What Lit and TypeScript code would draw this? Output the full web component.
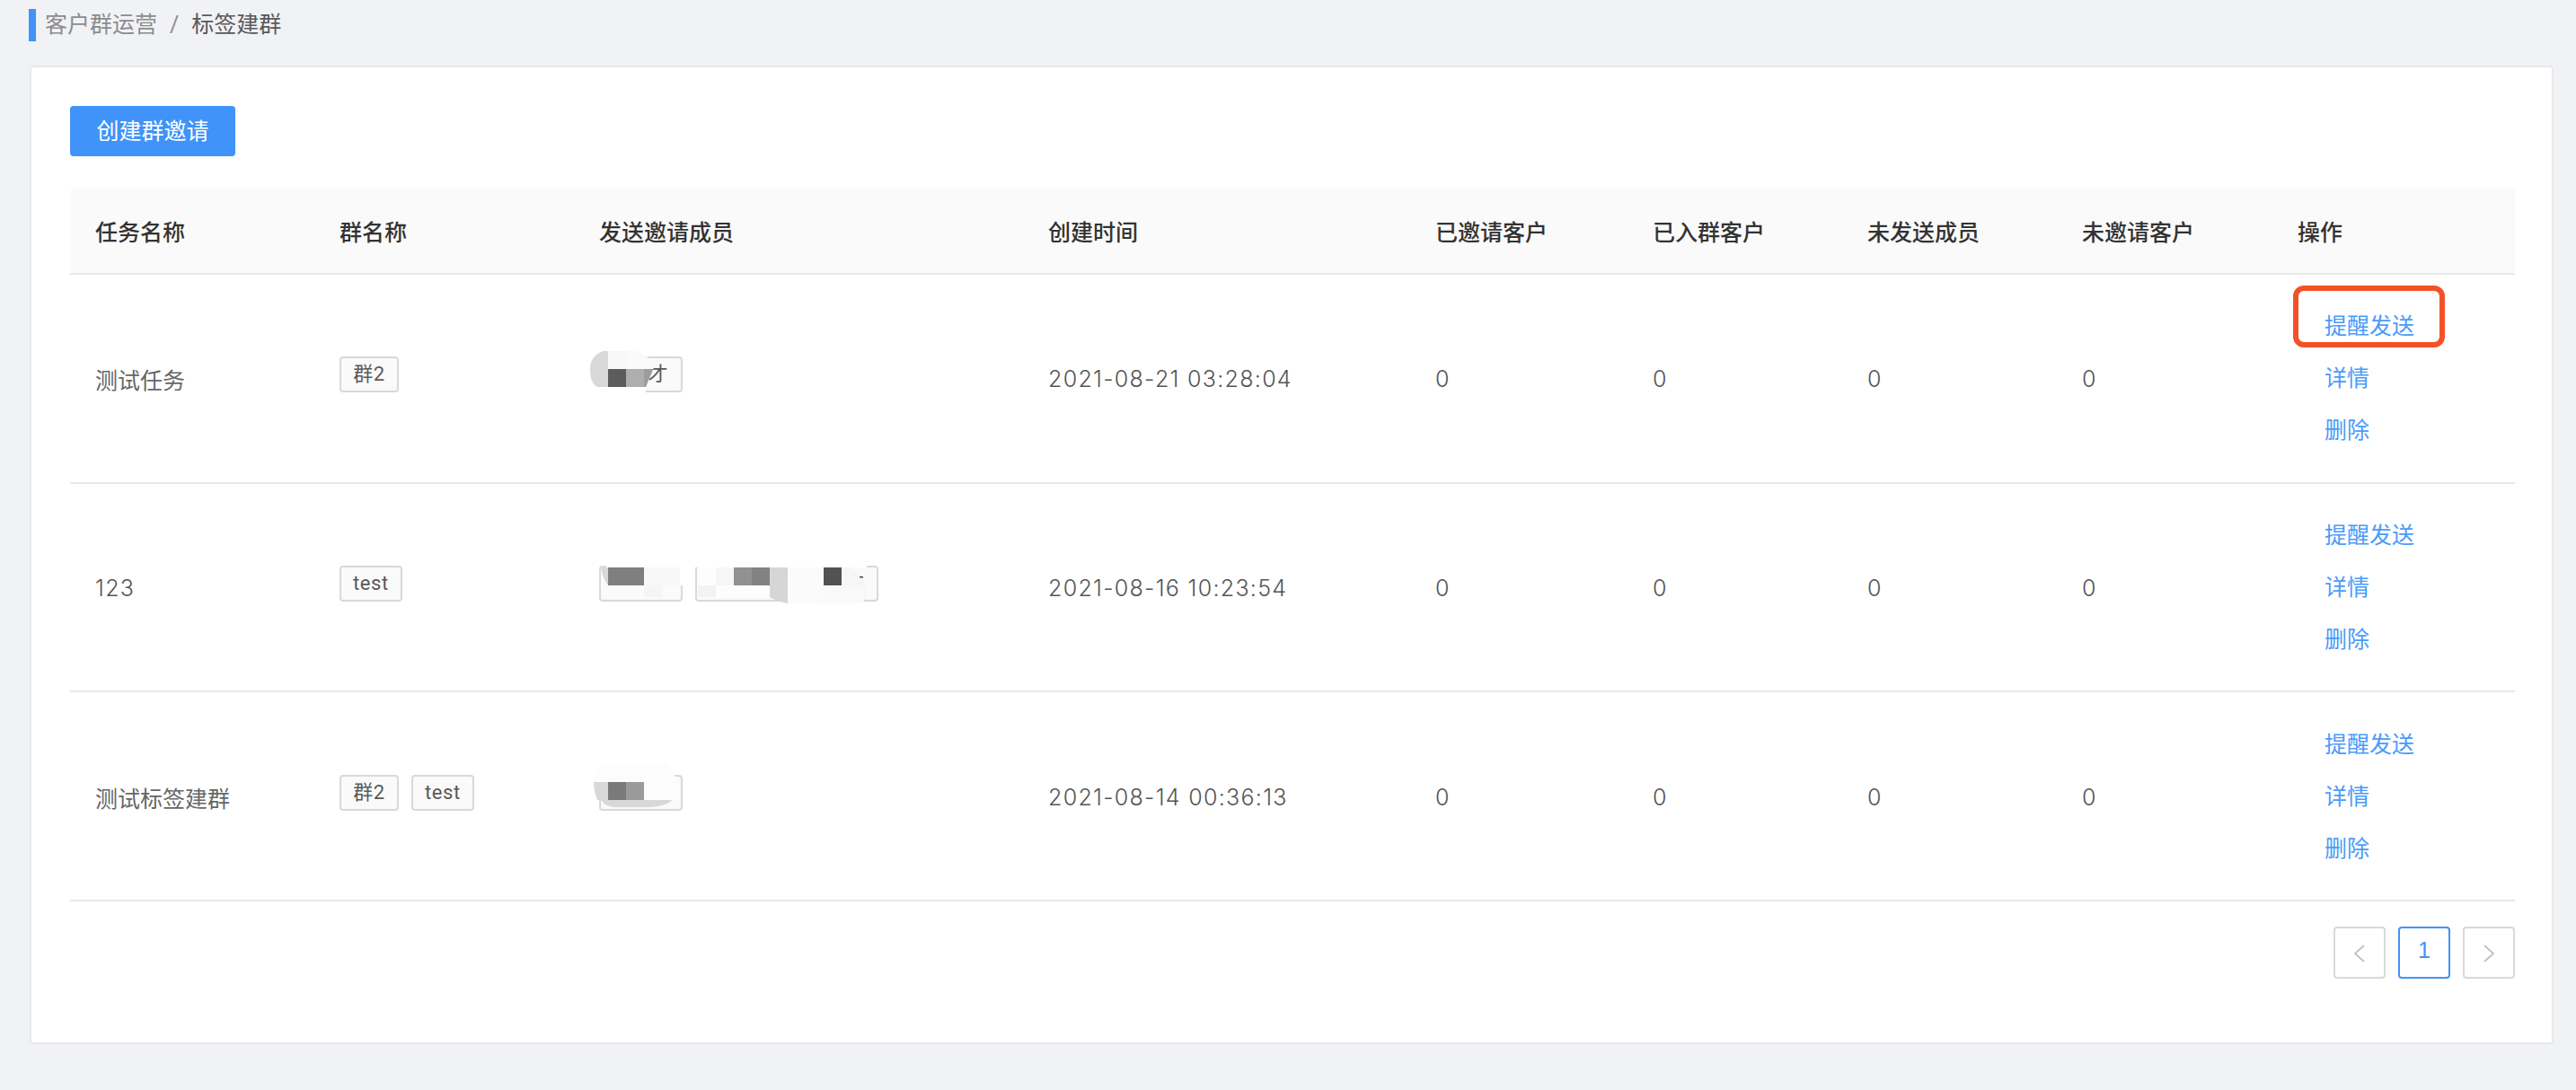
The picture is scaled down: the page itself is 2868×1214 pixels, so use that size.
import { LitElement, html, css, svg } from "lit";
import { customElement } from "lit/decorators.js";

interface Row { name: string; latin: boolean; tags: string[]; members: string[]; time: string; mosaic: unknown; mw: number; }

const cell = (x: number, y: number, w: number, h: number, c: string) =>
  svg`<rect x=${x} y=${y} width=${w} height=${h} fill=${c}></rect>`;

const mosaic1 = svg`<svg class="mosaic m1" width="80" height="50" viewBox="0 0 80 50">
  <defs><clipPath id="c1"><path d="M14 0H52Q60 4 68 10L72 16L62 40H8Q0 36 0 20Q0 6 14 0Z"></path></clipPath></defs>
  ${cell(8, 40, 54, 7, "#ffffff")}
  <g clip-path="url(#c1)">
    ${cell(0, 0, 20, 40, "#d8d8d8")}${cell(20, 0, 20, 20, "#f8f8f8")}${cell(40, 0, 40, 20, "#fafafa")}
    ${cell(20, 20, 20, 20, "#5c5c5c")}${cell(40, 20, 20, 20, "#aeaeae")}${cell(60, 20, 20, 20, "#9c9c9c")}
  </g></svg>`;

const mosaic2 = svg`<svg class="mosaic m2" width="320" height="44" viewBox="0 0 320 44">
  ${cell(8, 0, 86, 2, "#ffffff")}${cell(90, 0, 6, 22, "#ffffff")}
  <path d="M2 2H10V22Q4 14 2 2Z" fill="#d8d8d8"></path>
  ${cell(10, 2, 40, 20, "#7f7f7f")}${cell(50, 2, 40, 20, "#f8f8f8")}
  ${cell(4, 22, 86, 13, "#fbfbfb")}${cell(50, 22, 20, 13, "#f5f5f5")}
  ${cell(108, 0, 190, 2, "#ffffff")}
  ${cell(110, 2, 80, 20, "#fdfdfd")}${cell(110, 22, 80, 13, "#fdfdfd")}
  ${cell(110, 22, 20, 13, "#f3f3f3")}${cell(130, 2, 20, 20, "#f6f6f6")}
  ${cell(150, 2, 20, 20, "#919191")}${cell(170, 2, 20, 20, "#828282")}
  <path d="M190 2H210V42Q198 40 190 35Z" fill="#d6d6d6"></path>
  ${cell(210, 2, 40, 40, "#fbfbfb")}${cell(250, 2, 20, 20, "#525252")}
  ${cell(250, 22, 40, 20, "#f9f9f9")}
  <path d="M270 2H278Q290 6 296 20V38L290 42V22H270Z" fill="#f6f6f6"></path>
  ${cell(290, 22, 5, 18, "#f9f9f9")}
  ${cell(290, 12, 4, 1.5, "#444444")}
</svg>`;

const mosaic3 = svg`<svg class="mosaic m3" width="100" height="50" viewBox="0 0 100 50">
  <path d="M10 0H80Q90 6 92 20H0Q2 8 10 0Z" fill="#fcfcfc"></path>
  <path d="M0 20H16V40H4Q0 30 0 20Z" fill="#d8d8d8"></path>
  ${cell(16, 20, 20, 20, "#7a7a7a")}${cell(36, 20, 20, 20, "#9a9a9a")}${cell(56, 20, 40, 20, "#fcfcfc")}
  <path d="M8 40H88Q78 48 60 48H24Q14 48 8 40Z" fill="#d8d8d8"></path>
</svg>`;

const rows: Row[] = [
  { name: "测试任务", latin: false, tags: ["群2"], members: ["才"], time: "2021-08-21 03:28:04", mosaic: mosaic1, mw: 0 },
  { name: "123", latin: true, tags: ["test"], members: ["\u00a0", "\u00a0"], time: "2021-08-16 10:23:54", mosaic: mosaic2, mw: 1 },
  { name: "测试标签建群", latin: false, tags: ["群2", "test"], members: ["\u00a0"], time: "2021-08-14 00:36:13", mosaic: mosaic3, mw: 0 },
];

const heads = ["任务名称", "群名称", "发送邀请成员", "创建时间", "已邀请客户", "已入群客户", "未发送成员", "未邀请客户", "操作"];
const widths = [272, 289, 500, 431, 242, 239, 239, 240, 270];

@customElement("app-root")
export class AppRoot extends LitElement {
  static styles = css`
    :host {
      display: block;
      min-height: 1214px;
      background: #f0f2f5;
      font-family: "Roboto", "Noto Sans CJK SC", sans-serif;
      font-size: 25px;
      color: #666;
      padding: 0 25px 0 33px;
      box-sizing: border-box;
    }
    .crumb {
      height: 73px;
      display: flex;
      align-items: flex-start;
      padding-top: 10px;
      box-sizing: border-box;
      margin-left: -1px;
    }
    .crumb .mark { width: 8px; height: 36px; background: #3f93f9; margin-right: 10px; }
    .crumb .text { line-height: 36px; color: #8c8c8c; white-space: pre; }
    .crumb .sep { margin: 0 14px; color: #8c8c8c; }
    .crumb .cur { color: #595959; }
    .card {
      background: #fff;
      border: 2px solid #e9e9e9;
      border-radius: 4px;
      padding: 43px 41px 71px 43px;
    }
    .btn {
      display: block;
      width: 184px;
      height: 56px;
      background: #3f93f9;
      color: #fff;
      border: 0;
      border-radius: 4px;
      font: inherit;
      padding: 0 0 4px;
      box-shadow: 0 4px 0 rgba(0, 0, 0, 0.015);
      margin-bottom: 36px;
    }
    table { border-collapse: separate; border-spacing: 0; table-layout: fixed; width: 2722px; }
    th {
      height: 94px;
      background: #fafafa;
      border-bottom: 2px solid #e8e8e8;
      color: #333;
      font-weight: 500;
      text-align: left;
      padding: 0 0 0 28px;
    }
    th:first-child { border-top-left-radius: 4px; }
    th:last-child { border-top-right-radius: 4px; }
    td {
      border-bottom: 2px solid #e8e8e8;
      padding: 29.33px 0 27.33px 28px;
      vertical-align: middle;
    }
    .num {
      font-family: "Inter", "Noto Sans CJK SC", sans-serif;
      font-weight: 300;
      letter-spacing: 1.3px;
      color: #555;
    }
    .tags { display: flex; gap: 14px; position: relative; margin-bottom: 10px; }
    .tag {
      height: 40px;
      box-sizing: border-box;
      padding: 0 14px;
      border: 2px solid #d9d9d9;
      border-radius: 4px;
      background: #fafafa;
      font-size: 22px;
      line-height: 36px;
      letter-spacing: 0.6px;
      color: #595959;
      white-space: nowrap;
    }
    .tags.group .tag { min-width: 66px; text-align: center; padding: 0 13px; }
    .member { min-width: 93px; text-align: right; }
    .member.wide { min-width: 204px; }
    .mosaic { position: absolute; top: 0; left: 0; }
    .m1 { left: -10px; top: -6px; }
    .m2 { left: 0; top: 0; }
    .m3 { left: -6px; top: -12px; }
    .ops { display: flex; flex-direction: column; align-items: flex-start; position: relative; padding-left: 30px; }
    .ops a { line-height: 58px; color: #4a9bfa; }
    .ring {
      position: absolute;
      left: -5px;
      top: -17px;
      width: 169px;
      height: 69px;
      box-sizing: border-box;
      border: 6px solid #f15327;
      border-radius: 12px;
    }
    .pager { display: flex; justify-content: flex-end; gap: 14px; margin-top: 28px; width: 2722px; }
    .pg {
      width: 58px;
      height: 58px;
      box-sizing: border-box;
      border: 2px solid #d9d9d9;
      border-radius: 4px;
      display: flex;
      align-items: center;
      justify-content: center;
      font-family: "Liberation Sans", sans-serif;
      font-size: 25px;
      color: #3f93f9;
      padding-bottom: 4px;
    }
    .pg.cur { border-color: #3f93f9; }
    .pg svg { display: block; margin-top: 6px; }
  `;

  render() {
    return html`
      <div class="crumb">
        <div class="mark"></div>
        <div class="text">客户群运营<span class="sep">/</span><span class="cur">标签建群</span></div>
      </div>
      <div class="card">
        <button class="btn">创建群邀请</button>
        <table>
          <colgroup>${widths.map((w) => html`<col style="width:${w}px" />`)}</colgroup>
          <thead><tr>${heads.map((h) => html`<th>${h}</th>`)}</tr></thead>
          <tbody>
            ${rows.map((r, i) => html`
              <tr>
                <td class=${r.latin ? "num" : ""}>${r.name}</td>
                <td><div class="tags group">${r.tags.map((t) => html`<span class="tag">${t}</span>`)}</div></td>
                <td>
                  <div class="tags">
                    ${r.members.map((m, j) => html`<span class="tag member ${r.mw && j === 1 ? "wide" : ""}">${m}</span>`)}
                    ${r.mosaic}
                  </div>
                </td>
                <td class="num">${r.time}</td>
                <td class="num">0</td><td class="num">0</td><td class="num">0</td><td class="num">0</td>
                <td>
                  <div class="ops">
                    <a>提醒发送</a><a>详情</a><a>删除</a>
                    ${i === 0 ? html`<div class="ring"></div>` : ""}
                  </div>
                </td>
              </tr>`)}
          </tbody>
        </table>
        <div class="pager">
          <div class="pg"><svg width="14" height="20" viewBox="0 0 14 20" fill="none" stroke="#bfbfbf" stroke-width="1.7"><path d="M12 1 2 10l10 9"></path></svg></div>
          <div class="pg cur">1</div>
          <div class="pg"><svg width="14" height="20" viewBox="0 0 14 20" fill="none" stroke="#bfbfbf" stroke-width="1.7"><path d="M2 1l10 9-10 9"></path></svg></div>
        </div>
      </div>
    `;
  }
}
